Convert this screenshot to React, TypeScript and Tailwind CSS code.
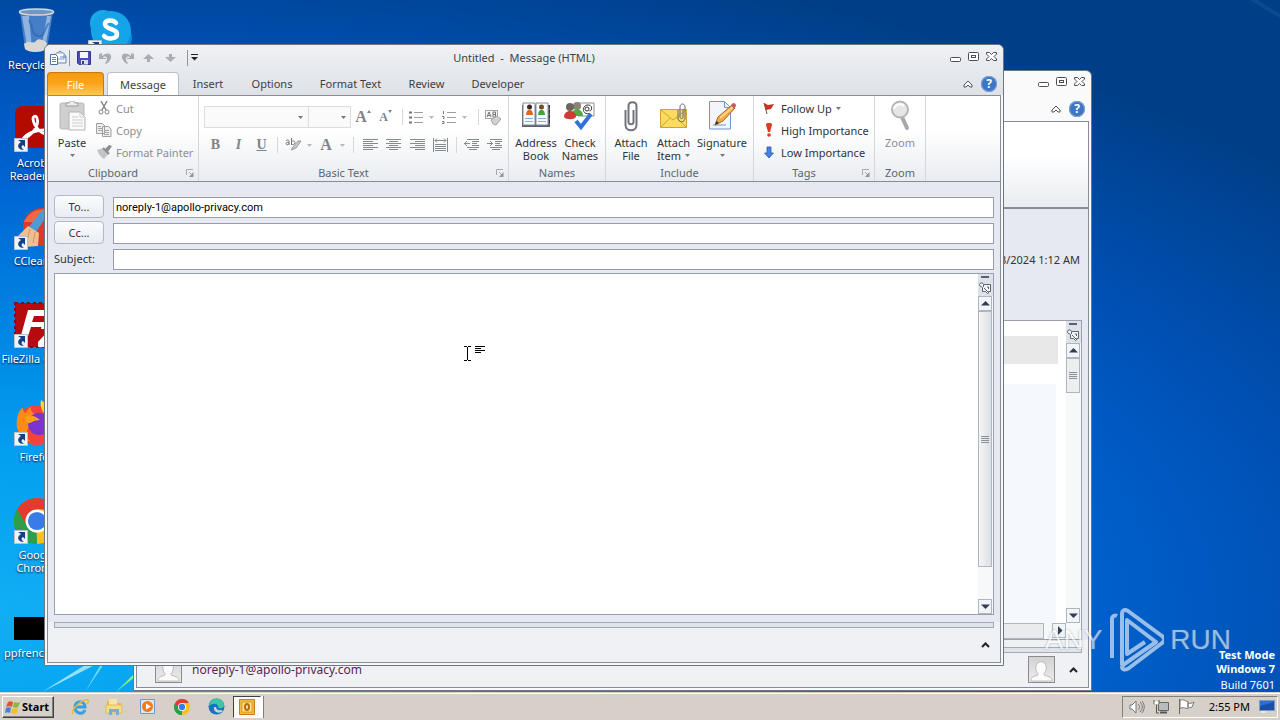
import type { ReactNode } from "react"

const Svg: React.FC<{ w: number; h: number; box?: string; className?: string; children: ReactNode }> = ({
  w,
  h,
  box,
  className = "",
  children,
}) => (
  <svg width={w} height={h} viewBox={box ?? `0 0 ${w} ${h}`} fill="none" className={`shrink-0 ${className}`} aria-hidden="true">
    {children}
  </svg>
)

/* ---------- small shared glyphs ---------- */

const Caret: React.FC<{ color?: string }> = ({ color = "#777" }) => (
  <Svg w={5} h={3}>
    <path d="M0 0h5L2.5 3z" fill={color} />
  </Svg>
)

const Launcher = () => (
  <Svg w={8} h={8} className="absolute right-1 bottom-1">
    <path d="M.5 6V.5H7M3 3l3 3" stroke="#a4a9b0" />
    <path d="M7.500 3v5H3z" fill="#8d939b" />
  </Svg>
)

const ChevronUp = () => (
  <Svg w={9} h={6}>
    <path d="M1 5l3.500-3.500L8 5" stroke="#222" strokeWidth="2" />
  </Svg>
)

const Person = () => (
  <Svg w={27} h={27} className="border border-[#8b8b8b] bg-gradient-to-b from-[#d2d2d2] to-[#ededed]">
    <path
      d="M2 26c0-4 2-5 7-6 1-1 1-2 0-3-3-4-2-12 4-12s7 8 4 12c-1 1-1 2 0 3 5 1 8 2 8 6z"
      fill="#fbfbfb"
      stroke="#b5b5b5"
    />
  </Svg>
)

/* ---------- desktop icons ---------- */

const Shortcut = () => (
  <Svg w={14} h={14} className="absolute bottom-0 left-0">
    <path d="M.5.5h13v13H.5z" fill="#eef3f8" stroke="#b7c3cf" />
    <path d="M4 2h7v7L9 7c-2 1-2 3 1 5-6 0-8-5-3-8z" fill="#173f86" />
  </Svg>
)

const RecycleBin = () => (
  <Svg w={46} h={46}>
    <path d="M6 4l5 37c3 4 19 4 22 0l6-37z" fill="#5d8fd0" fillOpacity=".75" />
    <path d="M8 8l5 30 5 3L15 8zM27 41l6-33h4l-6 32z" fill="#cfe0f4" fillOpacity=".55" />
    <path d="M15 12c5 10 2 14 9 16s6-8 11-13" stroke="#2c63ad" strokeWidth="2" strokeOpacity=".6" />
    <path d="M10 36c5-5 9 1 12-3s8 0 11 2l-1 6c-5 4-17 4-21 0z" fill="#dad8d2" />
    <ellipse cx="22.500" cy="4" rx="17" ry="3" fill="#7197c2" stroke="#d2d8df" strokeWidth="1.500" />
  </Svg>
)

const Skype = () => (
  <Svg w={46} h={46}>
    <circle cx="15" cy="15" r="13" fill="#19a9e8" />
    <circle cx="30" cy="30" r="14" fill="#0a8bd8" />
    <circle cx="23" cy="23" r="20" fill="#14a5e8" />
    <path
      d="M28 15c-3-4-11-3-11 1 0 6 12 4 12 10 0 5-9 6-13 2"
      stroke="#fff"
      strokeWidth="4.500"
      strokeLinecap="round"
    />
  </Svg>
)

const Acrobat = () => (
  <Svg w={46} h={46}>
    <rect x="1" width="44" height="42" rx="7" fill="#b30b00" />
    <path
      d="M9 33c8-3 17-13 14-21-1-3-4-2-4 1 1 8 9 16 15 15 4-1 1-5-5-4-8 0-17 4-20 9z"
      stroke="#fff"
      strokeWidth="2.800"
    />
  </Svg>
)

const CCleaner = () => (
  <Svg w={46} h={46}>
    <circle cx="28" cy="23" r="19" fill="#d93a2b" />
    <path d="M10 18C15 6 30 2 38 9L22 18z" fill="#ee6a45" />
    <path d="M30 4l6 3-14 21-8-4z" fill="#4a9bd8" />
    <path d="M14 22l11 7-1 13-13 1-9-9z" fill="#efc08e" />
    <path d="M16 25l-3 12M21 28l-2 11" stroke="#cf9660" />
  </Svg>
)

const FileZilla = () => (
  <Svg w={46} h={46}>
    <path d="M1 1h44v44H1z" fill="#b40a10" stroke="#7a1016" strokeWidth="2" strokeDasharray="3 3" />
    <path d="M14 8h21l-1 6H20l-2 6h14l-1 5H17l-4 12H6zM28 22h16v5L32 40h12v5H24v-5l12-13h-9z" fill="#fff" />
  </Svg>
)

const Firefox = () => (
  <Svg w={46} h={46}>
    <circle cx="23" cy="25" r="20" fill="#f4433c" />
    <path d="M3 20C4 12 7 8 9 8c0 3 1 4 3 5 1-3 3-5 5-6-1 4 2 7 7 8l-6 8c-5 5-8 12-1 19C6 38 1 28 3 20z" fill="#ff8a16" />
    <path d="M27 0c7 5 15 12 15 23 0 6-3 11-6 14V18C30 14 25 9 27 0z" fill="#ffd42e" />
    <circle cx="25" cy="24" r="11" fill="#7a35d0" />
    <path d="M11 17c6-3 12 0 15 3-7 0-9 4-13 3z" fill="#ff9d1c" />
  </Svg>
)

const Chrome: React.FC<{ size: number }> = ({ size }) => (
  <Svg w={size} h={size} box="0 0 48 48">
    <path d="M24 24L3.200 12A24 24 0 0144.800 12z" fill="#e33b2e" />
    <path d="M24 24L3.200 12A24 24 0 0024 48z" fill="#2f9e49" />
    <path d="M24 24h-1L24 48A24 24 0 0044.800 12H24z" fill="#fbc116" />
    <path d="M3.200 12L14 30l10-6V12z" fill="#e33b2e" />
    <path d="M3.200 12L14 30l9 6 1 12A24 24 0 013.200 12z" fill="#2f9e49" />
    <circle cx="24" cy="24" r="12" fill="#fff" />
    <circle cx="24" cy="24" r="9.500" fill="#3a7bea" />
  </Svg>
)

const BlackFile = () => (
  <Svg w={46} h={46}>
    <path d="M0 21h46v23H0z" fill="#000" />
  </Svg>
)

const desktopIcons: { label: string; icon: ReactNode; shortcut: boolean }[] = [
  { label: "Recycle Bin", icon: <RecycleBin />, shortcut: false },
  { label: "Acrobat Reader DC", icon: <Acrobat />, shortcut: true },
  { label: "CCleaner", icon: <CCleaner />, shortcut: true },
  { label: "FileZilla\u00a0Client", icon: <FileZilla />, shortcut: true },
  { label: "Firefox", icon: <Firefox />, shortcut: true },
  { label: "Google Chrome", icon: <Chrome size={46} />, shortcut: true },
  { label: "ppfrench.jpg", icon: <BlackFile />, shortcut: false },
]

const DesktopIcon: React.FC<{ label: string; icon: ReactNode; shortcut: boolean }> = ({ label, icon, shortcut }) => (
  <button className="flex h-[98px] w-[74px] flex-col items-center gap-1 text-center leading-[13px] text-white">
    <span className="relative block h-[46px] w-[46px]">
      {icon}
      {shortcut && <Shortcut />}
    </span>
    <span className="[text-shadow:0_1px_2px_#003]">{label}</span>
  </button>
)

/* ---------- window chrome ---------- */

const WindowControls = () => (
  <div className="flex items-center gap-[6px]">
    <button aria-label="Minimize">
      <Svg w={12} h={12}>
        <rect x=".5" y="5.500" width="10" height="4" rx="1" fill="#fff" stroke="#4b4f55" />
      </Svg>
    </button>
    <button aria-label="Maximize">
      <Svg w={12} h={12}>
        <rect x=".5" y=".5" width="10" height="8" rx="1" fill="#fff" stroke="#4b4f55" />
        <rect x="3.500" y="3.500" width="4" height="2" stroke="#4b4f55" />
      </Svg>
    </button>
    <button aria-label="Close">
      <Svg w={12} h={12}>
        <path
          d="M.5.500H3.500l2 2 2-2h3v1.500L8 4.500l2.500 2.500v1.500h-3l-2-2-2 2h-3V7L3 4.500.500 2z"
          fill="#fff"
          stroke="#4b4f55"
        />
      </Svg>
    </button>
  </div>
)

const HelpControls = () => (
  <div className="flex items-center gap-2">
    <button aria-label="Minimize the Ribbon">
      <Svg w={10} h={8}>
        <path d="M1 5l4-4 4 4v2H7L5 5 3 7H1z" fill="#fff" stroke="#4b4f55" />
      </Svg>
    </button>
    <button
      aria-label="Help"
      className="flex h-4 w-4 items-center justify-center rounded-full bg-[#3f76c4] text-xs font-bold text-white ring-1 ring-[#7ea3d8] ring-inset"
    >
      ?
    </button>
  </div>
)

const ScrollButton: React.FC<{ label: string; d: string }> = ({ label, d }) => (
  <button aria-label={label} className="flex h-[15px] w-[14px] shrink-0 items-center justify-center border border-[#b0b6bf] bg-[#f2f4f7]">
    <Svg w={9} h={9}>
      <path d={d} fill="#2f3d55" />
    </Svg>
  </button>
)

const Grip = () => (
  <Svg w={8} h={7}>
    <path d="M0 .5h8M0 2.500h8M0 4.500h8M0 6.500h8" stroke="#8a9099" />
  </Svg>
)

const SplitHandle = () => (
  <div className="flex h-[22px] shrink-0 flex-col items-center justify-between bg-[#dce1ea] py-[2px] pr-px">
    <span className="h-[2px] w-2 bg-[#5a626e]" />
    <Svg w={12} h={12}>
      <path d="M.5 2.500l1-1.500h2l1 1.500h7v7h-2v1.500l-1 .5-2-2h-3v-4l-3-2z" fill="#f3f5f8" stroke="#5d646e" />
      <path d="M4.500 3v2M5 6l4 4M8 5h1.500v2" stroke="#5d646e" />
    </Svg>
  </div>
)

const Splitter = () => <div className="h-[6px] shrink-0 border border-[#a3aab5] bg-[#dfe4ea]" />

/* ---------- message window ---------- */

const SmallAction: React.FC<{ icon: ReactNode; label: string; off?: boolean; menu?: boolean }> = ({
  icon,
  label,
  off,
  menu,
}) => (
  <button className={`flex h-[22px] items-center gap-1 whitespace-nowrap ${off ? "text-[#8b8f95]" : "text-[#303338]"}`}>
    <span className="flex w-4 shrink-0 justify-center">{icon}</span>
    {label}
    {menu && <Caret />}
  </button>
)

const BigAction: React.FC<{ icon: ReactNode; lines: string[]; width: string; menu?: "inline" | "below"; off?: boolean }> = ({
  icon,
  lines,
  width,
  menu,
  off,
}) => (
  <button className={`flex shrink-0 flex-col items-center leading-[13px] whitespace-nowrap ${width} ${off ? "text-[#8b8f95]" : "text-[#303338]"}`}>
    <span className="flex h-[39px] items-center justify-center">{icon}</span>
    {lines.map((line, i) => (
      <span key={line} className="flex items-center gap-1">
        {line}
        {menu === "inline" && i === lines.length - 1 && <Caret />}
      </span>
    ))}
    {menu === "below" && (
      <span className="flex h-[13px] items-center">
        <Caret />
      </span>
    )}
  </button>
)

const Group: React.FC<{ title: string; width: string; launcher?: boolean; children: ReactNode }> = ({
  title,
  width,
  launcher,
  children,
}) => (
  <section className={`relative flex shrink-0 flex-col border-r border-[#d3d7dc] ${width}`}>
    <div className="flex h-[69px] pt-px">{children}</div>
    <h2 className={`text-center leading-[15px] text-[#5c6470] ${launcher ? "pr-5" : ""}`}>{title}</h2>
    {launcher && <Launcher />}
  </section>
)

const Divider: React.FC<{ width: string }> = ({ width }) => (
  <span className={`flex h-4 shrink-0 justify-center ${width}`}>
    <span className="w-px bg-[#d5d8dc]" />
  </span>
)

const Tool: React.FC<{ label: string; width: string; children: ReactNode }> = ({ label, width, children }) => (
  <button aria-label={label} className={`flex h-[22px] shrink-0 items-center justify-center text-[#80848a] ${width}`}>
    {children}
  </button>
)

const Lines: React.FC<{ d: string }> = ({ d }) => (
  <Svg w={15} h={14}>
    <path d={d} stroke="#858a91" />
  </Svg>
)

const serif = "font-[Liberation_Serif,serif] font-bold"

const ClipboardGroup = () => (
  <Group title="Clipboard" width="w-[151px]" launcher>
    <BigAction
      width="w-12"
      menu="below"
      lines={["Paste"]}
      icon={
        <Svg w={28} h={32}>
          <rect x="2" y="2" width="24" height="26" rx="2" fill="#cfcfcf" stroke="#b8b8b8" />
          <path d="M8 5V2h3c1-3 5-3 6 0h3v3z" fill="#ededed" stroke="#9c9c9c" />
          <path d="M11 11h11l5 5v13H11z" fill="#fafafa" stroke="#b3b3b3" />
          <path d="M22 11v5h5M14 16h6M14 19h11M14 22h11M14 25h11" stroke="#cdcdcd" />
        </Svg>
      }
    />
    <div className="flex flex-col">
      <SmallAction
        off
        label="Cut"
        icon={
          <Svg w={12} h={14}>
            <path d="M3 0l5 9M9 0L4 9" stroke="#858585" strokeWidth="1.500" />
            <circle cx="3" cy="11" r="2" stroke="#858585" />
            <circle cx="9" cy="11" r="2" stroke="#858585" />
          </Svg>
        }
      />
      <SmallAction
        off
        label="Copy"
        icon={
          <Svg w={16} h={14}>
            <path d="M.5.5h6l2 2v8h-8zM6.500 3.500h6l2.500 2.500v7.500H6.500z" fill="#eee" stroke="#a0a0a0" />
            <path d="M2 3.500h3M2 5.500h4M2 7.500h4M8 7.500h5M8 9.500h5M8 11.500h5" stroke="#a5a5a5" />
          </Svg>
        }
      />
      <SmallAction
        off
        label="Format Painter"
        icon={
          <Svg w={16} h={14}>
            <path d="M9 4l4-4 3 1-4 6z" fill="#8d8d8d" />
            <path d="M1 5l7-2 5 5-5 6c-3-2-5-4-7-9z" fill="#c4c4c4" />
            <path d="M7 3l6 6" stroke="#8d8d8d" strokeWidth="2" />
          </Svg>
        }
      />
    </div>
  </Group>
)

const BasicTextGroup = () => (
  <Group title="Basic Text" width="w-[310px]" launcher>
    <div className="flex flex-col gap-[6px] pt-[9px] pl-[5px]">
      <div className="flex items-center">
        <label className="relative flex w-[105px] items-center">
          <select aria-label="Font" className="h-[22px] w-full appearance-none border border-[#dadde1] bg-[#fafafa]" />
          <span className="pointer-events-none absolute right-[6px]">
            <Caret />
          </span>
        </label>
        <label className="relative flex w-[42px] items-center">
          <select aria-label="Font size" className="h-[22px] w-full appearance-none border border-l-0 border-[#dadde1] bg-[#fafafa]" />
          <span className="pointer-events-none absolute right-[5px]">
            <Caret />
          </span>
        </label>
        <Tool label="Grow font" width="w-[24px]">
          <span className={`text-base leading-4 ${serif}`}>A</span>
          <Svg w={4} h={14}>
            <path d="M0 3l2-3 2 3z" fill="#80848a" />
          </Svg>
        </Tool>
        <Tool label="Shrink font" width="w-[21px]">
          <span className={`text-xs leading-4 ${serif}`}>A</span>
          <Svg w={4} h={14}>
            <path d="M0 0l2 3 2-3z" fill="#80848a" />
          </Svg>
        </Tool>
        <Divider width="w-[12px]" />
        <Tool label="Bullets" width="w-[26px] gap-[6px]">
          <Svg w={14} h={13}>
            <path d="M0 1.500h3M0 6.500h3M0 11.500h3" stroke="#777" strokeWidth="2" />
            <path d="M5 1.500h9M5 6.500h9M5 11.500h9" stroke="#9a9fa6" />
          </Svg>
          <Caret color="#b5b8bc" />
        </Tool>
        <Tool label="Numbering" width="w-[40px] gap-[6px]">
          <Svg w={14} h={13}>
            <path d="M1.500 0v3M0 5.500h2v2H1M0 10.500h2v2H0" stroke="#777" />
            <path d="M5 1.500h9M5 6.500h9M5 11.500h9" stroke="#9a9fa6" />
          </Svg>
          <Caret color="#b5b8bc" />
        </Tool>
        <Divider width="w-2" />
        <Tool label="Clear formatting" width="w-[22px]">
          <Svg w={17} h={17}>
            <rect x=".5" y="1.500" width="12" height="8" fill="#f4f4f4" stroke="#a5a5a5" />
            <path d="M2 8l2-5 2 5M3 6.500h2M8 3v5h2.500V3zM8 5.500h3" stroke="#777" />
            <path d="M6 11l6-4 4 3-5 6-3-1z" fill="#d2d2d2" stroke="#a5a5a5" />
          </Svg>
        </Tool>
      </div>
      <div className="flex items-center">
        <Tool label="Bold" width="w-[23px]">
          <span className={`text-sm leading-4 ${serif}`}>B</span>
        </Tool>
        <Tool label="Italic" width="w-[23px]">
          <span className={`text-sm leading-4 italic ${serif}`}>I</span>
        </Tool>
        <Tool label="Underline" width="w-[23px]">
          <span className={`text-sm leading-4 underline ${serif}`}>U</span>
        </Tool>
        <Divider width="w-[9px]" />
        <Tool label="Text highlight color" width="w-[22px]">
          <Svg w={17} h={14}>
            <path d="M1 2.500c2-1 3-.5 3 1v3.500M4 4.500c-2-.5-3 0-3 1.200S3 7.500 4 5.500M6.500 0v7M6.500 3.500c2-1.500 4 0 3.500 1.500s-2 2-3.500 1" stroke="#777" />
            <path d="M16 3l-5 7-5 2 2-3 5-6z" fill="#ccc" stroke="#999" />
          </Svg>
        </Tool>
        <Tool label="Highlight colors" width="w-[11px]">
          <Caret color="#b5b8bc" />
        </Tool>
        <Tool label="Font color" width="w-[22px]">
          <span className={`text-base leading-4 ${serif}`}>A</span>
        </Tool>
        <Tool label="Font colors" width="w-[11px]">
          <Caret color="#b5b8bc" />
        </Tool>
        <Divider width="w-[10px]" />
        <Tool label="Align left" width="w-[24px]">
          <Lines d="M0 1.500h15M0 3.500h10M0 5.500h15M0 7.500h10M0 9.500h15M0 11.500h10" />
        </Tool>
        <Tool label="Center" width="w-[23px]">
          <Lines d="M0 1.500h15M3 3.500h9M0 5.500h15M3 7.500h9M0 9.500h15M3 11.500h9" />
        </Tool>
        <Tool label="Align right" width="w-[24px]">
          <Lines d="M0 1.500h15M5 3.500h10M0 5.500h15M5 7.500h10M0 9.500h15M5 11.500h10" />
        </Tool>
        <Tool label="Distributed" width="w-[23px]">
          <Lines d="M.5 0v14M14.500 0v14M2 2.500h11M4 .5l-2 2 2 2M11 .5l2 2-2 2M2 6.500h11M2 8.500h11M2 10.500h11M2 12.500h11" />
        </Tool>
        <Divider width="w-[8px]" />
        <Tool label="Decrease indent" width="w-[23px]">
          <Lines d="M3 1.500h12M8 3.500h7M8 5.500h5M8 7.500h7M3 9.500h12M5 11.500h8M6 5.500H0M3 3L.5 5.500 3 8" />
        </Tool>
        <Tool label="Increase indent" width="w-[23px]">
          <Lines d="M3 1.500h12M8 3.500h7M8 5.500h5M8 7.500h7M3 9.500h12M5 11.500h8M0 5.500h6M3 3l2.500 2.500L3 8" />
        </Tool>
      </div>
    </div>
  </Group>
)

const NamesGroup = () => (
  <Group title="Names" width="w-[97px]">
    <div className="flex pl-[5px]">
      <BigAction
        width="w-[44px]"
        lines={["Address", "Book"]}
        icon={
          <Svg w={30} h={32}>
            <path d="M1 4h28v22H1z" fill="#5b6069" />
            <path d="M2 2h12v22H2zM15 2h12v22H15z" fill="#fbfcff" stroke="#858b96" />
            <circle cx="8.500" cy="6" r="2.500" fill="#3a2a22" />
            <path d="M5 14c0-7 7-7 7 0z" fill="#e8641b" />
            <circle cx="20.500" cy="6" r="2.500" fill="#7a4a22" />
            <path d="M17 14c0-7 7-7 7 0z" fill="#4aa33a" />
            <path d="M4 17.500h8M4 20.500h8M17 17.500h8M17 20.500h8" stroke="#8ea8d6" />
            <path d="M28.500 4v20" stroke="#333" strokeDasharray="3 2" />
          </Svg>
        }
      />
      <BigAction
        width="w-[44px]"
        lines={["Check", "Names"]}
        icon={
          <Svg w={32} h={32}>
            <path d="M14 2h16v13H14z" fill="#fff" stroke="#8b919a" />
            <circle cx="23" cy="8" r="2" stroke="#333" />
            <path d="M25.500 12.500c-8 2-8-9-1-8.500 4 0 4 6 1 6" stroke="#333" />
            <circle cx="13" cy="5" r="4" fill="#8a8377" />
            <path d="M7 15c0-9 12-9 12 0z" fill="#54a83e" />
            <circle cx="6" cy="6" r="4" fill="#6d665f" />
            <path d="M0 16c0-8 12-8 12 0-2 3-10 3-12 0z" fill="#cf3a34" />
            <path d="M12 20l5 6L27 13" stroke="#2f74d8" strokeWidth="4" />
          </Svg>
        }
      />
    </div>
  </Group>
)

const IncludeGroup = () => (
  <Group title="Include" width="w-[148px]">
    <div className="flex pl-1">
      <BigAction
        width="w-[42px]"
        lines={["Attach", "File"]}
        icon={
          <Svg w={14} h={32}>
            <path
              d="M9.500 9v12c0 3-5 3-5 0V5c0-5 8-5 8 0v19c0 7-11 7-11 0V9"
              stroke="#70757c"
              strokeWidth="2"
            />
          </Svg>
        }
      />
      <BigAction
        width="w-[43px]"
        menu="inline"
        lines={["Attach", "Item"]}
        icon={
          <Svg w={28} h={28}>
            <path d="M.5 6.500h26v18H.5z" fill="#fbdc5e" stroke="#d0a337" />
            <path d="M1 24l9-9M26 24l-9-9M1 7l12 10L26 7" stroke="#d0a337" />
            <path d="M23 6v8c0 2-3 2-3 0V4c0-4 5-4 5 0v11c0 5-7 5-7 0V7" stroke="#5e6874" />
          </Svg>
        }
      />
      <BigAction
        width="w-[54px]"
        menu="below"
        lines={["Signature"]}
        icon={
          <Svg w={28} h={32}>
            <path d="M1.500.500h15l6 6V28h-21z" fill="#f1f6fd" stroke="#7095c8" />
            <path d="M16.500.5v6h6M5 24h13" stroke="#7095c8" />
            <path d="M7 24l3-8L24 4l3 3-12 13z" fill="#f5a83c" stroke="#a86b25" />
            <path d="M12 17L25 6" stroke="#fbd58c" strokeWidth="2" />
            <path d="M23 4l2-2c2 0 3 1 3 3l-2 3z" fill="#c35a5a" />
            <path d="M7 24l1.500-4 2.500 2z" fill="#333" />
          </Svg>
        }
      />
    </div>
  </Group>
)

const TagsGroup = () => (
  <Group title="Tags" width="w-[121px]" launcher>
    <div className="flex flex-col pl-[7px]">
      <SmallAction
        menu
        label="Follow Up"
        icon={
          <Svg w={12} h={13}>
            <path d="M1 1l3 11" stroke="#555" />
            <path d="M1 1l4 2 6-1-3 5-5 1z" fill="#c9331f" />
          </Svg>
        }
      />
      <SmallAction
        label="High Importance"
        icon={
          <Svg w={8} h={14}>
            <path d="M1 2c0-3 6-3 6 0L5 9H3z" fill="#dd3c22" />
            <circle cx="4" cy="12" r="1.800" fill="#dd3c22" />
          </Svg>
        }
      />
      <SmallAction
        label="Low Importance"
        icon={
          <Svg w={10} h={13}>
            <path d="M3 1h4v6h2.500L5 12 .5 7H3z" fill="#4a80e0" stroke="#2a57b0" strokeWidth=".8" />
          </Svg>
        }
      />
    </div>
  </Group>
)

const ZoomGroup = () => (
  <Group title="Zoom" width="w-[51px]">
    <BigAction
      off
      width="w-[50px]"
      lines={["Zoom"]}
      icon={
        <Svg w={20} h={34}>
          <path d="M12 17l5 11" stroke="#a8a8a8" strokeWidth="4" strokeLinecap="round" />
          <circle cx="10" cy="9.500" r="8" fill="#e6e6e6" stroke="#b5b5b5" strokeWidth="2" />
          <path d="M4 9c1-5 7-6 10-3" stroke="#fff" strokeWidth="2" />
        </Svg>
      }
    />
  </Group>
)

const QuickAccess = () => (
  <div className="flex items-center">
    <Svg w={17} h={15} className="mr-[2px]">
      <path d="M4 6l6-5 6 5v7H4z" fill="#eef4fb" stroke="#6c87ab" />
      <path d="M6 3h8v6H6z" fill="#fff" stroke="#8ba0bb" />
      <path d="M10 7h6" stroke="#4f8ad0" />
      <path d="M.5 4.500h5l2 2v8h-7z" fill="#fff" stroke="#4f6f9b" />
      <path d="M2 7.500h4M2 9.500h4M2 11.500h4" stroke="#4f8ad0" />
    </Svg>
    <span className="h-4 w-px bg-[#8f959d]" />
    <button aria-label="Save" className="ml-[7px] w-[22px]">
      <Svg w={14} h={14}>
        <path d="M.5.500h13v13H2l-1.500-1.500z" fill="#4a50b8" stroke="#32388c" />
        <path d="M3 1h8v6H3z" fill="#f4f6ff" />
        <path d="M4 9h7v4.500H4z" fill="#d9dced" />
        <path d="M5 10h2v3H5z" fill="#32388c" />
      </Svg>
    </button>
    <button aria-label="Undo" className="w-[22px]">
      <Svg w={13} h={12}>
        <path d="M0 2l3-1v3c5-4 10-3 9 2-1 3-3 5-5 6l-1-1c2-2 3-5 1-6-1-1-3 0-3 1h3v1H0z" fill="#a9adb3" />
      </Svg>
    </button>
    <button aria-label="Redo" className="w-[22px]">
      <Svg w={13} h={12}>
        <path d="M13 2l-3-1v3C5 0 0 1 1 6c1 3 3 5 5 6l1-1C5 9 4 6 6 5c1-1 3 0 3 1H6v1h7z" fill="#a9adb3" />
      </Svg>
    </button>
    <button aria-label="Previous item" className="w-[22px]">
      <Svg w={11} h={9}>
        <path d="M5.500 1L11 6H7v3H4V6H0z" fill="#a9adb3" />
      </Svg>
    </button>
    <button aria-label="Next item" className="w-[22px]">
      <Svg w={11} h={9}>
        <path d="M5.500 9L11 4H7V1H4v3H0z" fill="#a9adb3" />
      </Svg>
    </button>
    <span className="h-4 w-px bg-[#8f959d]" />
    <button aria-label="Customize Quick Access Toolbar" className="ml-[3px]">
      <Svg w={7} h={7}>
        <path d="M0 .5h7" stroke="#222" />
        <path d="M0 3h7L3.500 6.500z" fill="#222" />
      </Svg>
    </button>
  </div>
)

const tabs = [
  { name: "Insert", width: "w-[58px]" },
  { name: "Options", width: "w-[70px]" },
  { name: "Format Text", width: "w-[87px]" },
  { name: "Review", width: "w-[65px]" },
  { name: "Developer", width: "w-[78px]" },
]

const field = "h-[21px] min-w-0 flex-1 border border-[#989ca6] bg-white px-[2px] text-black outline-none"
const fieldButton = "h-[23px] w-[50px] rounded-sm border border-[#b3b9c6] bg-gradient-to-b from-[#fbfcfd] to-[#e9ecf2] text-[#333]"

const MessageWindow = () => (
  <main className="absolute top-[44px] right-[276px] bottom-[26px] left-[44px] flex flex-col rounded-t-md border border-[#6c7580] bg-[#f8f9fa] p-[2px] pt-0">
    <div className="absolute inset-x-0 top-0 h-[50px] rounded-t-md bg-gradient-to-b from-[#eff1f4] to-[#dee2e7]" />
    <header className="relative flex h-[27px] items-center justify-between pr-[3px] pb-[2px] pl-[3px]">
      <div className="flex-1">
        <QuickAccess />
      </div>
      <h1 className="whitespace-pre text-[#3a3f46]">Untitled  -  Message (HTML)</h1>
      <div className="flex flex-1 justify-end">
        <WindowControls />
      </div>
    </header>
    <nav className="relative flex h-[23px] items-stretch pr-[4px] text-[#3a3f46]">
      <button className="mr-[3px] w-[57px] rounded-t border border-b-0 border-[#c67a10] bg-gradient-to-b from-[#f59a0c] via-[#fba51c] to-[#ffc94a] text-white">
        File
      </button>
      <button className="w-[72px] rounded-t border border-b-0 border-[#b9bec5] bg-white">Message</button>
      {tabs.map((tab) => (
        <button key={tab.name} className={tab.width}>
          {tab.name}
        </button>
      ))}
      <div className="ml-auto flex items-center">
        <HelpControls />
      </div>
    </nav>
    <div className="relative flex min-h-0 flex-1 flex-col border border-[#868d97] bg-[#e6e9f1]">
      <div className="flex h-[86px] shrink-0 overflow-hidden border-b border-[#868d97] bg-gradient-to-b from-white from-40% to-[#e9ecf0]">
        <ClipboardGroup />
        <BasicTextGroup />
        <NamesGroup />
        <IncludeGroup />
        <TagsGroup />
        <ZoomGroup />
      </div>
      <form className="flex min-h-0 flex-1 flex-col px-[6px] pt-[13px]">
        <div className="flex h-[26px] gap-[9px]">
          <button type="button" className={fieldButton}>
            To...
          </button>
          <input
            aria-label="To"
            defaultValue="noreply-1@apollo-privacy.com"
            className={`mt-[2px] font-[Roboto,sans-serif] ${field}`}
          />
        </div>
        <div className="flex h-[26px] gap-[9px]">
          <button type="button" className={fieldButton}>
            Cc...
          </button>
          <input aria-label="Cc" className={`mt-[2px] ${field}`} />
        </div>
        <div className="flex h-[26px] gap-[9px]">
          <label htmlFor="subject" className="w-[50px] leading-6 text-[#333]">
            Subject:
          </label>
          <input id="subject" className={`mt-[2px] ${field}`} />
        </div>
        <div className="flex min-h-0 flex-1 border border-[#9ba0aa] bg-white">
          <textarea aria-label="Message body" className="min-w-0 flex-1 resize-none p-2 outline-none" />
          <div className="flex w-[15px] flex-col bg-[#f7f8f9]">
            <SplitHandle />
            <ScrollButton label="Scroll up" d="M0 6.500h9L4.500 2z" />
            <div className="flex-1">
              <div className="flex h-[89%] w-[14px] items-center justify-center border border-[#b0b6bf] bg-gradient-to-r from-[#f4f5f6] to-[#dcdfe2]">
                <Grip />
              </div>
            </div>
            <ScrollButton label="Scroll down" d="M0 2.500h9L4.500 7z" />
          </div>
        </div>
      </form>
      <footer className="flex h-[47px] shrink-0 flex-col bg-[#eff1f4]">
        <div className="h-[7px] bg-[#e6e9f1]" />
        <div className="px-[6px]">
          <Splitter />
        </div>
        <button aria-label="Expand people pane" className="mr-[10px] flex flex-1 items-center self-end">
          <ChevronUp />
        </button>
      </footer>
    </div>
  </main>
)

/* ---------- received message, mostly behind the compose window ---------- */

const ReadingWindow = () => (
  <section className="absolute top-[70px] right-[188px] bottom-px left-[133px] flex flex-col rounded-t-md border border-[#6c7580] bg-[#fafafb] p-[2px] pt-0">
    <div className="flex h-[26px] items-center justify-end pr-[3px] pb-[2px]">
      <WindowControls />
    </div>
    <div className="flex h-[24px] items-center justify-end pr-[4px]">
      <HelpControls />
    </div>
    <div className="flex min-h-0 flex-1 flex-col border border-[#868d97] bg-[#e6e9f1]">
      <div className="h-[87px] shrink-0 border-b-2 border-[#868d97] bg-gradient-to-b from-white from-40% to-[#e9ecf0]" />
      <p className="flex h-[111px] shrink-0 items-center justify-end pr-2 pb-[10px] text-[#333]">4/3/2024 1:12 AM</p>
      <div className="mx-[6px] flex min-h-0 flex-1 border border-[#9ba0aa] bg-white">
        <div className="flex min-w-0 flex-1 flex-col">
          <div className="mt-[15px] mr-2 h-7 bg-[#e8e8e8]" />
          <div className="mt-5 mr-[10px] flex-1 bg-[#f5f9fd]" />
          <div className="flex h-[16px] justify-end gap-2 bg-[#f7f8f9]">
            <div className="flex-1 border border-[#b0b6bf] bg-[#e9ebed]" />
            <ScrollButton label="Scroll right" d="M3 0v9l4.500-4.500z" />
          </div>
        </div>
        <div className="flex w-[15px] flex-col bg-[#f7f8f9]">
          <SplitHandle />
          <ScrollButton label="Scroll up" d="M0 6.500h9L4.500 2z" />
          <div className="flex h-[35px] w-[14px] items-center justify-center border border-[#b0b6bf] bg-[#eceef0]">
            <Grip />
          </div>
          <div className="flex-1" />
          <ScrollButton label="Scroll down" d="M0 2.500h9L4.500 7z" />
          <div className="h-4" />
        </div>
      </div>
      <div className="flex h-[47px] shrink-0 flex-col bg-[#eff1f4]">
        <div className="px-[6px] pt-[7px]">
          <Splitter />
        </div>
        <div className="flex items-center pt-[3px] pr-[10px] pl-[18px]">
          <Person />
          <span className="ml-[10px] text-xs text-[#5a1f52]">noreply-1@apollo-privacy.com</span>
          <span className="ml-auto flex items-center gap-[14px]">
            <Person />
            <ChevronUp />
          </span>
        </div>
      </div>
    </div>
  </section>
)

/* ---------- desktop overlays ---------- */

const Wallpaper = () => (
  <div className="absolute inset-0 overflow-hidden bg-[radial-gradient(ellipse_130%_100%_at_0%_88%,#10aef4_0%,#03a0f0_22%,#0083e2_42%,#0064d2_62%,#0050b4_80%,#003f88_100%)]">
    <svg className="absolute bottom-0 left-0" width="140" height="40" viewBox="0 0 140 40" aria-hidden="true">
      <path d="M42 40L120 0h-14z" fill="#b8f0ff" fillOpacity=".8" />
      <path d="M85 40L112 0h-4z" fill="#a8f0ff" fillOpacity=".7" />
      <path d="M116 40l20-20v4z" fill="#8ff08a" />
    </svg>
    <svg className="absolute top-0 right-0" width="120" height="60" viewBox="0 0 120 60" aria-hidden="true">
      <path d="M90 0l30 18v-4L98 0z" fill="#3d8ac8" fillOpacity=".15" />
    </svg>
  </div>
)

const Watermark = () => (
  <div className="pointer-events-none absolute right-[49px] bottom-[20px] flex items-center gap-[6px] font-['Liberation_Sans',sans-serif] text-[28px] leading-none text-white opacity-60 [text-shadow:0_0_2px_#667788]">
    <span>ANY</span>
    <Svg w={56} h={64}>
      <path
        d="M4 50V11c0-3 3-4 5-3M14 57V6c0-4 3-5 6-3l34 25c3 2 3 5 0 7L21 60c-4 3-9 1-6-3l33-23L19 12v34l18-12"
        stroke="#fff"
        strokeWidth="4"
        strokeLinejoin="round"
      />
    </Svg>
    <span>RUN</span>
  </div>
)

const BuildInfo = () => (
  <div className="absolute right-[5px] -bottom-[2px] text-right leading-[14px] text-white">
    <p className="font-bold">Test Mode</p>
    <p className="font-bold">Windows 7</p>
    <p className="leading-[18px]">Build 7601</p>
  </div>
)

const TextCursor = () => (
  <svg className="absolute top-[345px] left-[463px]" width="23" height="18" viewBox="0 0 23 18" aria-hidden="true">
    <path d="M1 1.500h3M5 1.500h3M4.500 2v13M1 15.500h3M5 15.500h3M12 1.500h10M12 3.500h6M12 5.500h10M12 7.500h6" stroke="#000" />
  </svg>
)

/* ---------- taskbar ---------- */

const pinned: { name: string; icon: ReactNode }[] = [
  {
    name: "Internet Explorer",
    icon: (
      <Svg w={18} h={18}>
        <path d="M14 12c-2 5-10 4-10-3s10-7 10 0H5" stroke="#37a0e4" strokeWidth="3" />
        <path d="M2 16C-1 12 12 0 17 2c1 1 0 3-1 4" stroke="#e9b83b" strokeWidth="1.500" />
      </Svg>
    ),
  },
  {
    name: "Explorer",
    icon: (
      <Svg w={18} h={18}>
        <path d="M2 3h6l1 2h7v10H2z" fill="#e3b94e" />
        <path d="M4 1h8v6H4z" fill="#f7e4a6" />
        <path d="M1 7h16v8H1z" fill="#f5dc8c" stroke="#dfbd60" />
        <path d="M4 17v-6h10v6h-3v-3H7v3z" fill="#6cb1df" />
      </Svg>
    ),
  },
  {
    name: "Media Player",
    icon: (
      <Svg w={18} h={18}>
        <path d="M1.500 1.500h14v14h-14z" fill="#d7e8f8" stroke="#6c9cce" />
        <circle cx="8.500" cy="8.500" r="5.500" fill="#ee7e16" />
        <path d="M7 5.500v6l5-3z" fill="#fff" />
      </Svg>
    ),
  },
  { name: "Chrome", icon: <Chrome size={16} /> },
  {
    name: "Edge",
    icon: (
      <Svg w={17} h={17}>
        <circle cx="8.500" cy="8.500" r="8" fill="#1673c4" />
        <path d="M1 8c0-9 15-10 15-1 0 4-5 4-6 2 1-3-5-5-9-1z" fill="#3fc6a4" />
        <path d="M6 9c-1 6 6 7 9 4l-2-1c-3 1-5-1-5-3z" fill="#d6d2ca" />
      </Svg>
    ),
  },
]

const Taskbar = () => (
  <footer className="relative flex h-[28px] shrink-0 items-center border-t border-[#d6d0c8] bg-[#d6d0c8] pr-[2px] pl-[2px] shadow-[inset_0_1px_0_#fff]">
    <button className="flex h-[22px] w-[52px] items-center gap-[2px] border border-t-white border-r-[#404040] border-b-[#404040] border-l-white px-[2px] font-bold text-black shadow-[inset_-1px_-1px_0_#808080]">
      <Svg w={15} h={14}>
        <path d="M3 2c2-1 3-1 5 0L7 7C5 6 3 6 1 7z" fill="#e0542a" />
        <path d="M9 2c2 1 4 1 6 0l-2 5c-2 1-3 1-5 0z" fill="#84b93c" />
        <path d="M1 8c2-1 4-1 5 0l-1 5c-2-1-3-1-5 0z" fill="#3f83d8" />
        <path d="M7.500 8c2 1 4 1 5.500 0l-1 5c-2 1-4 1-6 0z" fill="#f3bd2c" />
      </Svg>
      Start
    </button>
    <div className="ml-[9px] flex items-center">
      {pinned.map((app) => (
        <button key={app.name} aria-label={app.name} className="flex w-[34px] items-center justify-center">
          {app.icon}
        </button>
      ))}
      <button
        aria-label="Outlook"
        className="flex h-[22px] w-[28px] items-center justify-center border border-t-[#404040] border-r-white border-b-white border-l-[#404040] bg-[#fbfaf8]"
      >
        <Svg w={16} h={16}>
          <path d="M.5.500h15v15H.5z" fill="#f6b73c" stroke="#c77f12" />
          <path d="M3 3h10v10H3z" fill="#fbe2a4" stroke="#e09a22" />
          <ellipse cx="8" cy="8" rx="2" ry="3" stroke="#b56d08" strokeWidth="2" />
        </Svg>
      </button>
      <span className="h-[22px] w-[3px] border-r border-[#808080] bg-white" />
    </div>
    <div className="ml-auto flex h-[22px] items-center gap-2 border border-t-[#808080] border-r-white border-b-white border-l-[#808080] pr-[2px] pl-[6px] text-black">
      <Svg w={16} h={14}>
        <path d="M1 5h2l4-4v12L3 9H1z" fill="#fff" stroke="#777" />
        <path d="M9 4c2 2 2 4 0 6M11 2c3 3 3 7 0 10M13 1c3 4 3 8 0 12" stroke="#777" />
      </Svg>
      <Svg w={17} h={15}>
        <path d="M5.500 3.500h10v8h-10z" fill="#b9bcbf" stroke="#666" />
        <path d="M7 13.500h7" stroke="#555" strokeWidth="2" />
        <path d="M1 1v4h5V1M3.500 5v9H6" stroke="#555" />
        <path d="M1.500 2.500h4v3h-4z" fill="#fff" />
      </Svg>
      <Svg w={17} h={15}>
        <path d="M1.500 0v15" stroke="#666" />
        <path d="M2 1.500c4-2 5 1 8 1v7c-3 0-4-2-8 0zM10 4c2 1 4 0 6-1l-2 5c-2 1-3 1-4 0z" fill="#fff" stroke="#777" />
      </Svg>
      <time className="ml-[6px]">2:55 PM</time>
      <Svg w={16} h={13} className="ml-px">
        <path d="M.5.500h15v10H.5z" fill="#2c6fd0" stroke="#7f99bd" />
        <path d="M1 7c4-4 9-1 14-6v9H1z" fill="#1a4fa8" />
        <path d="M2 12h5" stroke="#fff" />
      </Svg>
    </div>
  </footer>
)

const App: React.FC = () => {
  return (
    <div className="flex h-screen flex-col overflow-hidden font-['Noto_Sans',sans-serif] text-[11px] leading-[13px]">
      <div className="relative min-h-0 flex-1">
        <Wallpaper />
        <div className="relative flex pt-[8px]">
          <div className="flex flex-col">
            {desktopIcons.map((item) => (
              <DesktopIcon key={item.label} {...item} />
            ))}
          </div>
          <DesktopIcon label="Skype" icon={<Skype />} shortcut />
        </div>
        <ReadingWindow />
        <MessageWindow />
        <Watermark />
        <BuildInfo />
        <TextCursor />
      </div>
      <Taskbar />
    </div>
  )
}

export default App
